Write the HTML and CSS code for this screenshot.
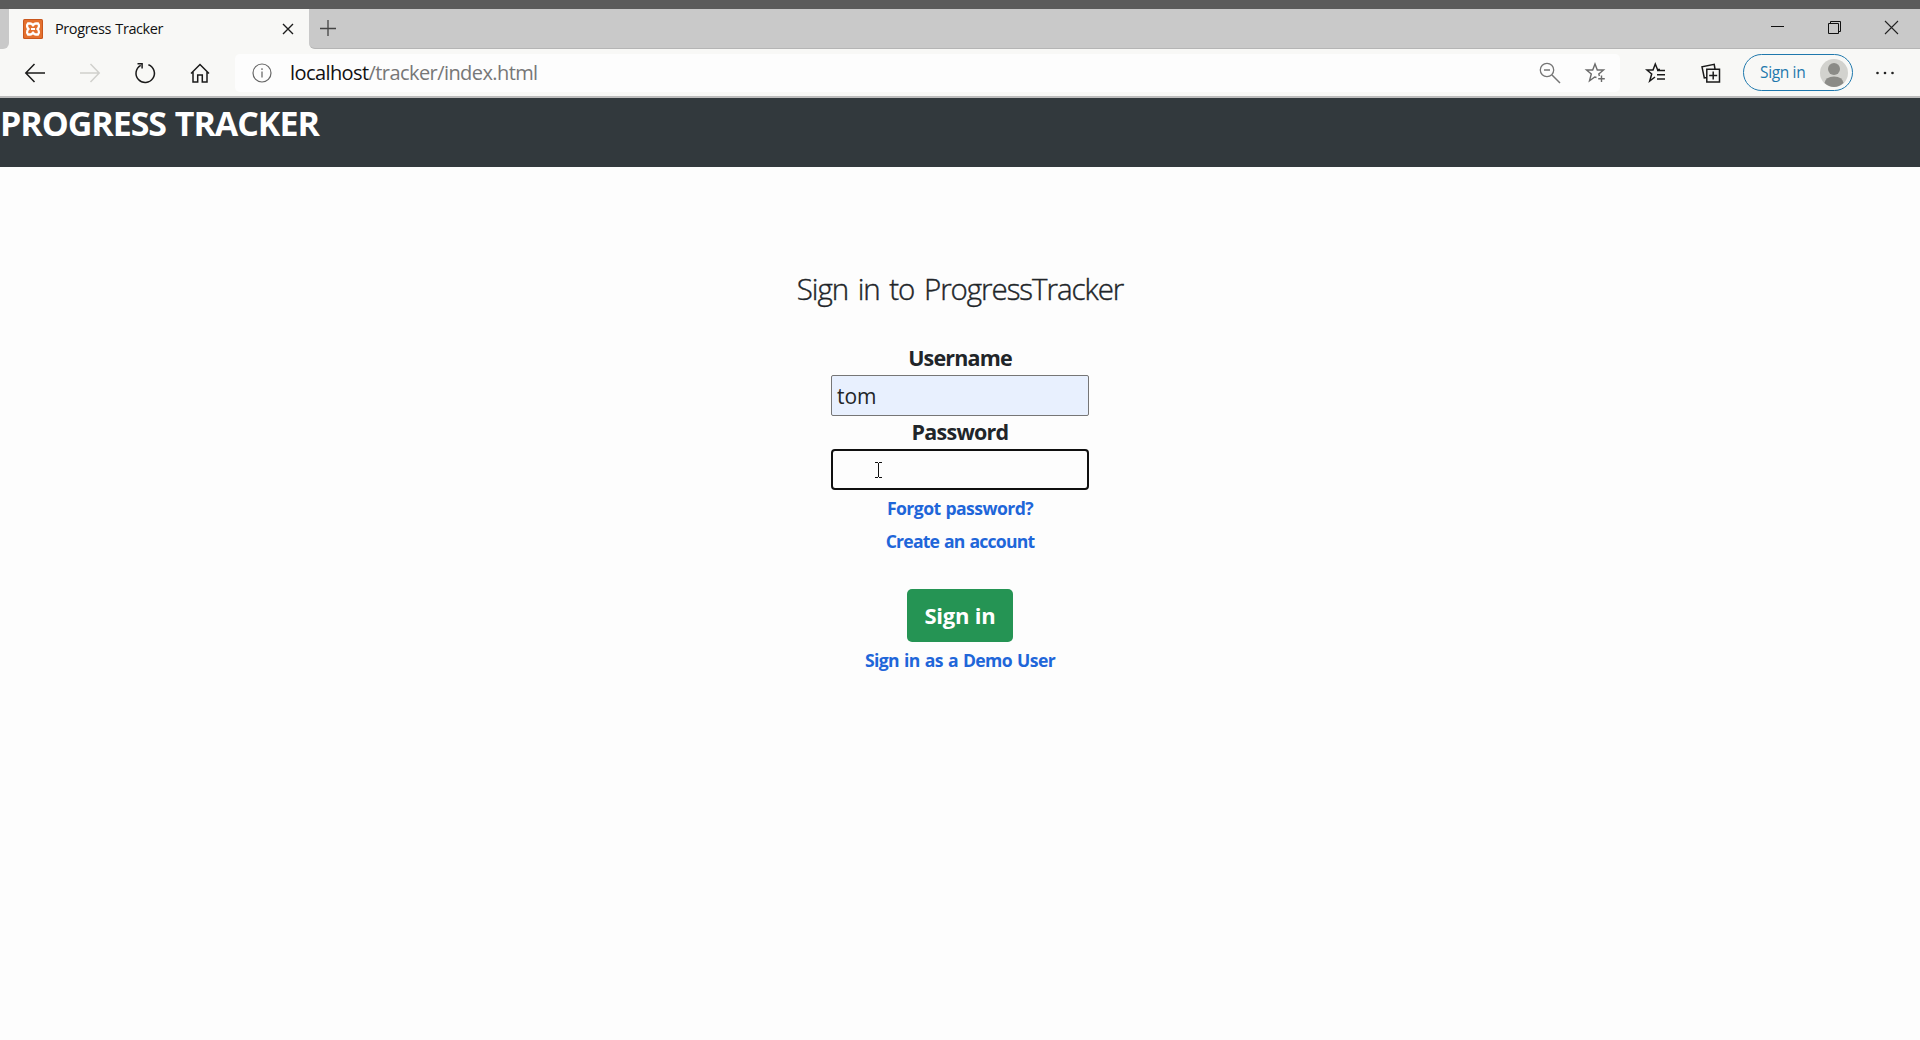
FILE: index.html
```html
<!DOCTYPE html>
<html lang="en">
<head>
<meta charset="utf-8">
<title>Progress Tracker</title>
<link rel="stylesheet" href="styles.css">
</head>
<body>
<div class="desktop-edge"></div>
<div class="tab-strip">
  <div class="tab-prev"></div>
  <div class="tab">
    <svg class="favicon" width="20" height="20" viewBox="0 0 20 20"><rect width="20" height="20" rx="1.5" fill="#c9571d"/><rect x="1" y="1" width="18" height="18" rx="1" fill="#e4702e"/><path d="M5 4.500h2.200Q8.500 4.500 10 6.300 11.500 4.500 12.800 4.500H15q1.300 1.500.9 3Q15.600 9 14.500 10q1.100 1 1.400 2.500.4 1.500-.9 3h-2.200Q11.500 15.500 10 13.700 8.500 15.500 7.200 15.500H5q-1.300-1.500-.9-3Q4.400 11 5.500 10 4.400 9 4.100 7.500q-.4-1.500.9-3Z" fill="none" stroke="#fff" stroke-width="2.300"/><path d="M8 10h4" stroke="#fff" stroke-width="2"/></svg>
    <span class="tab-title">Progress Tracker</span>
    <svg class="tab-close" width="12" height="12" viewBox="0 0 12 12"><path d="M1 1l10 10M11 1L1 11" stroke="#1c1c1c" stroke-width="1.4"/></svg>
  </div>
  <div class="tab-rest">
    <svg width="16" height="16" viewBox="0 0 16 16"><path d="M8 0v16M0 8.500h16" stroke="#444" stroke-width="1.300"/></svg>
    <div class="window-controls">
      <svg width="13" height="13" viewBox="0 0 13 13"><path d="M0 5.500h13" stroke="#111"/></svg>
      <svg width="13" height="13" viewBox="0 0 13 13"><path d="M.5 2.500h10v10H.5zM2.500 2.500v-2h10v10h-2" fill="none" stroke="#111"/></svg>
      <svg width="13" height="13" viewBox="0 0 13 13"><path d="M0 0l13 13M13 0L0 13" stroke="#222" stroke-width="1.100"/></svg>
    </div>
  </div>
</div>
<div class="toolbar">
  <div class="nav">
    <svg width="20" height="20" viewBox="0 0 20 20"><path d="M20 10H1M9.500 1L.8 10l8.700 9" fill="none" stroke="#1a1a1a" stroke-width="1.500"/></svg>
    <svg width="20" height="20" viewBox="0 0 20 20"><path d="M0 10h19M10.500 1l8.700 9-8.700 9" fill="none" stroke="#d0d0cc" stroke-width="1.500"/></svg>
    <svg width="20" height="20" viewBox="0 0 20 20"><path d="M5.700 2.300A9.200 9.200 0 1 0 13.400 1.700M2.500.8h4.600v4.600" fill="none" stroke="#1a1a1a" stroke-width="1.500"/></svg>
    <svg width="20" height="20" viewBox="0 0 20 20"><path d="M1 10.500l9-9 9 9M3 9v10h4.700v-7h4.600v7H17V9" fill="none" stroke="#1a1a1a" stroke-width="1.500"/></svg>
  </div>
  <div class="address">
    <svg width="20" height="20" viewBox="0 0 20 20"><circle cx="10" cy="10" r="9" fill="none" stroke="#666" stroke-width="1.200"/><path d="M10 8.500v6M10 5.300v1.600" stroke="#777" stroke-width="1.400"/></svg>
    <span class="url"><b>localhost</b>/tracker/index.html</span>
    <svg class="zoom" width="22" height="22" viewBox="0 0 22 22"><circle cx="8" cy="8" r="6.700" fill="none" stroke="#757575" stroke-width="1.300"/><path d="M5 8h6M13 13l8 8" stroke="#757575" stroke-width="1.500"/></svg>
    <svg width="22" height="22" viewBox="0 0 22 22"><path d="M11.500 15.500L9.800 15 4.500 18.800 6.300 12 1.500 8h6.200L10 2l2.300 6h6.200l-4.700 4 .6 2" fill="none" stroke="#6b6b6b" stroke-width="1.400"/><path d="M16.500 13.500v6.500M13.200 16.800h6.600" stroke="#6b6b6b" stroke-width="1.400"/></svg>
  </div>
  <div class="actions">
    <svg width="20" height="20" viewBox="0 0 20 20"><path d="M14 6.500h-2.500L9.300 1 7 7H1l4.700 4-2 7 5.300-4M11 7.500h8M11 11.800h8M11 16h8" fill="none" stroke="#1a1a1a" stroke-width="1.500"/></svg>
    <svg width="20" height="20" viewBox="0 0 20 20"><path d="M5.800 6.200h12.700v12.700H5.800zM12.200 8.500v8M8.200 12.500h8M5.800 14.600l-2.500.4L1 3.800l12.200-2.500.8 4.700" fill="none" stroke="#1a1a1a" stroke-width="1.500"/></svg>
    <div class="profile"><span>Sign in</span>
      <svg width="28" height="28" viewBox="0 0 28 28"><circle cx="14" cy="14" r="14" fill="#d2d2ce"/><circle cx="14" cy="10" r="6" fill="#8b8b87"/><path d="M4.500 24q1-6.500 9.500-6.500t9.500 6.500Q19 28 14 28t-9.500-4Z" fill="#8b8b87"/></svg>
    </div>
    <svg width="20" height="20" viewBox="0 0 20 20"><g fill="#222"><circle cx="2.500" cy="10" r="1.300"/><circle cx="10" cy="10" r="1.300"/><circle cx="17.500" cy="10" r="1.300"/></g></svg>
  </div>
</div>
<header class="site-header"><h1>PROGRESS TRACKER</h1></header>
<main class="login">
  <h2>Sign in to ProgressTracker</h2>
  <label class="label-user">Username</label>
  <div class="field field-filled"><span>tom</span></div>
  <label class="label-pass">Password</label>
  <div class="field field-focus">
    <svg class="cursor" width="7" height="16" viewBox="0 0 7 16"><path d="M0 .5h3M4 .5h3M3.500 1v14M0 15.500h3M4 15.500h3" stroke="#111"/></svg>
  </div>
  <a class="link-forgot">Forgot password?</a>
  <a class="link-create">Create an account</a>
  <div class="button"><span>Sign in</span></div>
  <a class="link-demo">Sign in as a Demo User</a>
</main>
</body>
</html>
```
FILE: styles.css
```css
* { box-sizing: border-box; }
body { margin: 0; height: 1040px; overflow: hidden; background: #fdfdfd; font-family: "Open Sans", "Noto Sans", sans-serif; color: #212529; }
svg { display: block; flex: none; overflow: visible; }
span, a, label, h1, h2 { white-space: nowrap; }
.desktop-edge { height: 9px; background: #5b5b5b; }
.tab-strip { display: flex; height: 40px; background: #f8f8f6; }
.tab-prev { width: 9px; background: #c9c9c9; border-radius: 0 0 6px 0; }
.tab { width: 300px; display: flex; align-items: center; padding: 0 15px 0 14px; border-radius: 7px 7px 0 0; }
.tab-title { margin-left: 12px; padding-bottom: 2px; font-size: 14.500px; letter-spacing: -0.400px; word-spacing: 1px; color: #111; }
.tab-close { margin-left: auto; }
.tab-rest { flex: 1; display: flex; align-items: center; justify-content: space-between; padding: 0 22px 2px 11px; background: #c9c9c9; border-bottom: 1px solid #b5b5b5; border-radius: 0 0 0 6px; }
.window-controls { display: flex; gap: 44px; }
.toolbar { display: flex; height: 49px; align-items: center; background: #f8f8f6; border-bottom: 2px solid #bcbcbc; }
.nav { width: 235px; display: flex; gap: 35px; padding-left: 25px; }
.address { display: flex; align-items: center; width: 1385px; height: 38px; padding: 0 13px 0 17px; background: #fdfdfd; border-radius: 5px; }
.url { margin-left: 18px; font-size: 20px; letter-spacing: -0.580px; color: #777; }
.url b { font-weight: 400; color: #111; }
.zoom { margin-left: auto; margin-right: 24px; }
.actions { flex: 1; display: flex; align-items: center; padding-left: 26px; }
.actions > svg + svg { margin-left: 35px; }
.profile { display: flex; align-items: center; justify-content: space-between; width: 110px; height: 37px; margin: 0 22px 0 22px; padding: 0 4px 0 16px; border: 1.500px solid #1f78ad; border-radius: 19px; font-size: 15.500px; letter-spacing: -0.350px; color: #1f78ad; }
.profile span { padding-bottom: 1px; }
.site-header { height: 69px; padding-top: 5px; background: #32393d; color: #fff; }
h1 { margin: 0; font-size: 34px; line-height: 40px; font-weight: 700; letter-spacing: -1.050px; word-spacing: 1px; }
.login { display: flex; flex-direction: column; align-items: center; padding-top: 101px; }
h2 { margin: 0 0 38px; font-size: 29.500px; line-height: 42px; font-weight: 300; letter-spacing: -1.050px; word-spacing: 3px; -webkit-text-stroke: 0.400px #212529; }
label { font-size: 21.500px; font-weight: 700; letter-spacing: -0.850px; }
.label-user { height: 27px; line-height: 20px; }
.field { display: flex; align-items: center; width: 258px; height: 41px; padding-left: 5px; border: 1px solid #767676; border-radius: 2px; font-size: 21px; }
.field-filled { background: #e8f0fe; }
.field-focus { border: 2px solid #101010; border-radius: 4px; background: #fdfdfd; padding-left: 42px; }
.label-pass { height: 33px; line-height: 31px; letter-spacing: -0.750px; }
a { font-size: 17.600px; font-weight: 700; color: #1f66d9; }
.link-forgot { height: 37px; line-height: 37px; letter-spacing: -0.580px; word-spacing: 1px; }
.link-create { height: 28px; line-height: 28px; letter-spacing: -0.780px; word-spacing: 1px; }
.button { display: flex; align-items: center; justify-content: center; width: 106px; height: 53px; margin-top: 34px; background: #259454; border-radius: 5px; color: #fff; font-size: 22px; font-weight: 700; }
.button span { letter-spacing: -0.200px; padding-bottom: 1px; }
.link-demo { height: 37px; line-height: 37px; letter-spacing: -0.600px; word-spacing: 1px; }
```
